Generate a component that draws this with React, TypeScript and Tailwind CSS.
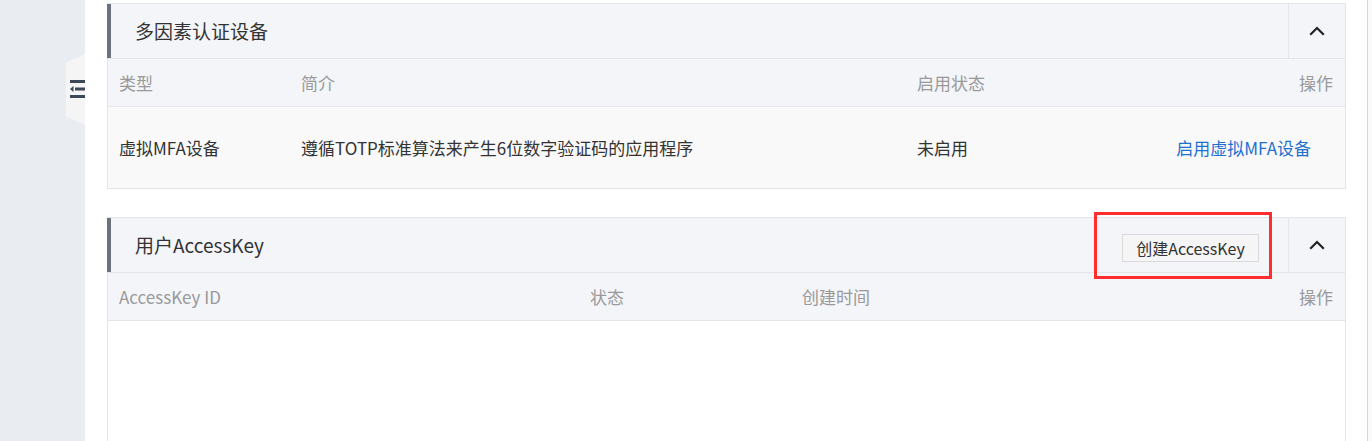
import React from "react";

const font = { fontFamily: '"Noto Sans CJK SC", "Noto Sans", sans-serif' };

function Chevron() {
  return (
    <svg width="16" height="10" viewBox="0 0 16 10" fill="none">
      <polyline points="2,8 8,2 14,8" stroke="#222" strokeWidth="2.2" strokeLinecap="square" />
    </svg>
  );
}

function PanelHeader({ title, children }: { title: string; children?: React.ReactNode }) {
  return (
    <div className="flex h-[55px] border-b border-[#e3e5ea] bg-[#f4f5f9]">
      <div className="w-[4px] -ml-px bg-[#6b727c]" />
      <div className="flex flex-1 items-center pl-[24px] text-[19px] text-[#333]">{title}</div>
      {children}
      <button className="flex w-[57px] items-center justify-center border-l border-[#e3e5ea]">
        <Chevron />
      </button>
    </div>
  );
}

export default function App() {
  return (
    <div className="flex h-[441px] w-[1372px] overflow-hidden bg-white" style={font}>
      {/* Sidebar */}
      <div className="relative w-[85px] shrink-0 bg-[#e9ecf0]">
        <div className="absolute left-[66px] top-[54px] h-[71px] w-[19px] bg-[#f5f5f5] [clip-path:polygon(100%_0,0_12%,0_88%,100%_100%)]" />
        <svg className="absolute left-[70px] top-[79px]" width="16" height="20" viewBox="0 0 16 20">
          <rect x="0" y="1" width="15" height="3" fill="#3b4656" />
          <rect x="5" y="8.5" width="10" height="3" fill="#3b4656" />
          <polygon points="0,10 3.5,7 3.5,13" fill="#3b4656" />
          <rect x="0" y="16" width="15" height="3" fill="#3b4656" />
        </svg>
      </div>

      {/* Main */}
      <div className="flex-1 pl-[22px] pr-[21px] pt-[3px]">
        {/* MFA panel */}
        <section className="border border-[#e3e5ea]">
          <PanelHeader title="多因素认证设备" />
          <div className="grid h-[48px] grid-cols-[182px_616px_1fr_auto] items-center border-b border-[#e3e5ea] bg-[#f4f5f9] pl-[11px] pr-[12px] text-[17px] text-[#999]">
            <span>类型</span>
            <span>简介</span>
            <span>启用状态</span>
            <span>操作</span>
          </div>
          <div className="grid h-[81px] grid-cols-[182px_616px_1fr_auto] items-center bg-[#f9f9f9] pl-[11px] pr-[34px] text-[17px] text-[#333]">
            <span>虚拟MFA设备</span>
            <span>遵循TOTP标准算法来产生6位数字验证码的应用程序</span>
            <span>未启用</span>
            <a className="text-[#1f70d0]">启用虚拟MFA设备</a>
          </div>
        </section>

        {/* AccessKey panel */}
        <section className="mt-[28px] h-[300px] border border-[#e3e5ea]">
          <PanelHeader title="用户AccessKey">
            <div className="relative mr-[29px] mt-[16px] self-start">
              <button className="h-[28px] w-[137px] border border-[#d9d9d9] bg-[#f5f5f5] text-[16px] text-[#333]">
                创建AccessKey
              </button>
              <div className="pointer-events-none absolute left-[-28px] right-[-13px] top-[-22px] bottom-[-17px] border-[3px] border-[#ff2d2d]" />
            </div>
          </PanelHeader>
          <div className="grid h-[48px] grid-cols-[471px_212px_1fr_auto] items-center border-b border-[#e3e5ea] bg-[#f4f5f9] pl-[11px] pr-[12px] text-[17px] text-[#999]">
            <span>AccessKey ID</span>
            <span>状态</span>
            <span>创建时间</span>
            <span>操作</span>
          </div>
        </section>
      </div>

      {/* Scrollbar edge */}
      <div className="w-[5px] shrink-0 border-l border-[#d6d6d6] bg-[#fafafa]" />
    </div>
  );
}
